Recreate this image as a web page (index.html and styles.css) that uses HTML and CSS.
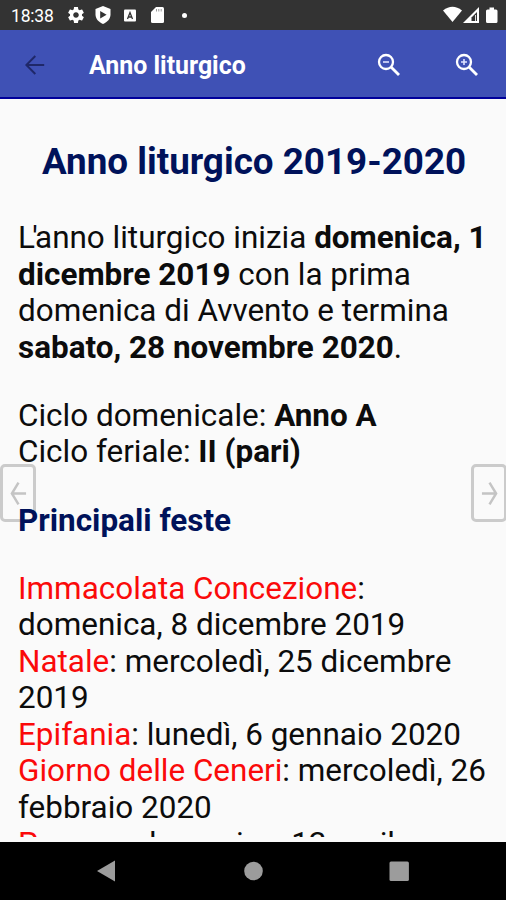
FILE: index.html
```html
<!DOCTYPE html>
<html lang="it">
<head>
<meta charset="utf-8">
<title>Anno liturgico</title>
<link rel="stylesheet" href="styles.css">
</head>
<body>
<div class="screen">
  <header class="status">
    <span class="clock">18:38</span>
    <svg class="st gear" viewBox="2 2 20 20"><path fill="#fff" d="M19.43 12.98c.04-.32.07-.64.07-.98s-.03-.66-.07-.98l2.11-1.65c.19-.15.24-.42.12-.64l-2-3.46c-.12-.22-.39-.3-.61-.22l-2.49 1c-.52-.4-1.08-.73-1.69-.98l-.38-2.65C14.46 2.18 14.25 2 14 2h-4c-.25 0-.46.18-.49.42l-.38 2.65c-.61.25-1.17.59-1.69.98l-2.49-1c-.23-.09-.49 0-.61.22l-2 3.46c-.13.22-.07.49.12.64l2.11 1.65c-.04.32-.07.65-.07.98s.03.66.07.98l-2.11 1.65c-.19.15-.24.42-.12.64l2 3.46c.12.22.39.3.61.22l2.49-1c.52.4 1.08.73 1.69.98l.38 2.65c.03.24.24.42.49.42h4c.25 0 .46-.18.49-.42l.38-2.65c.61-.25 1.17-.59 1.69-.98l2.49 1c.23.09.49 0 .61-.22l2-3.46c.12-.22.07-.49-.12-.64l-2.11-1.65zM12 15.5c-1.93 0-3.5-1.57-3.5-3.500s1.57-3.500 3.500-3.500 3.500 1.570 3.500 3.500-1.570 3.500-3.500 3.500z"/></svg>
    <svg class="st shield" viewBox="0 0 16 18"><path fill="#fff" d="M8 0l7.500 3v5.500c0 4.500-3.200 7.500-7.500 9.500-4.300-2-7.500-5-7.500-9.500V3z"/><path fill="#333" d="M5.200 5v7.400L11.600 8.700z"/></svg>
    <svg class="st abox" viewBox="0 0 12 12"><rect width="12" height="12" rx="1" fill="#fff"/><path d="M3.500 9.500L6 3l2.500 6.500M4.500 7.500h3" fill="none" stroke="#333" stroke-width="1.300"/></svg>
    <svg class="st card" viewBox="0 0 13 16"><path fill="#fff" d="M5 0h6.500Q13 0 13 1.500v13q0 1.500-1.500 1.500h-10Q0 16 0 14.500V5z"/><path stroke="#999" stroke-width="1" d="M5.500 2v2.500M7.800 2v2.500M10.200 2v2.500"/></svg>
    <i class="dot"></i>
    <span class="grow"></span>
    <svg class="signals" viewBox="0 0 56 18"><path fill="#fff" d="M0 4.500Q9.500-3 19 4.500L9.500 16z"/><path fill="#fff" d="M36 1v16H20z"/><path fill="#333" d="M34 6L28.500 11.500V15H34z"/><path d="M32.500 9v6" stroke="#ddd" stroke-width="1"/><path fill="#fff" d="M46.500 1.500h4.500v2h2q1.500 0 1.500 1.500v10.500q0 1.500-1.500 1.500h-8.500q-1.500 0-1.500-1.500V5q0-1.500 1.500-1.500h2z"/></svg>
  </header>
  <nav class="appbar">
    <svg class="back" viewBox="0 0 20 20"><path d="M19.200 10H2M10.300 1L1.300 10l9 9" fill="none" stroke="#1f2869" stroke-width="2"/></svg>
    <h1 class="title">Anno liturgico</h1>
    <svg class="mag" viewBox="0 0 24 24"><g fill="none" stroke="#fff"><circle cx="9" cy="9" r="7" stroke-width="2.300"/><path d="M14 14l8 8" stroke-width="2.800"/><path d="M6 9h6" stroke-width="1.600" stroke="#dfe2ff"/></g></svg>
    <svg class="mag plus" viewBox="0 0 24 24"><g fill="none" stroke="#fff"><circle cx="9" cy="9" r="7" stroke-width="2.300"/><path d="M14 14l8 8" stroke-width="2.800"/><path d="M6 9h6M9 6v6" stroke-width="1.600" stroke="#dfe2ff"/></g></svg>
  </nav>
  <main class="content">
    <div class="page">
      <h2 class="heading">Anno liturgico 2019-2020</h2>
      <p class="para"><span class="tight">L'</span>anno liturgico inizia <b>domenica, 1<br>dicembre 2019</b> con la prima<br>domenica di Avvento e termina<br><b>sabato, 28 novembre 2020</b>.</p>
      <p class="para">Ciclo domenicale: <b>Anno A</b><br>Ciclo feriale: <b>II (pari)</b></p>
      <h3 class="sub">Principali feste</h3>
      <p class="para"><span class="feast">Immacolata Concezione</span>:<br>domenica, 8 dicembre 2019<br><span class="feast">Natale</span>: mercoledì, 25 dicembre<br>2019<br><span class="feast">Epifania</span>: lunedì, 6 gennaio 2020<br><span class="feast">Giorno delle Ceneri</span>: mercoledì, 26<br>febbraio 2020<br><span class="feast">Pasqua</span>: domenica, 12 aprile</p>
    </div>
    <button class="pager prev" aria-label="Precedente"><svg viewBox="0 0 18 26"><path d="M17 13H2M9 1.500L2 13l7 11.500" fill="none" stroke="#c4c4c4" stroke-width="2.600"/></svg></button>
    <button class="pager next" aria-label="Successivo"><svg viewBox="0 0 18 26"><path d="M1 13h15M9 1.500L16 13 9 24.500" fill="none" stroke="#c4c4c4" stroke-width="2.600"/></svg></button>
  </main>
  <footer class="navbar">
    <svg viewBox="0 0 20 22"><path d="M18 .5v21L0 11z" fill="#9c9c9c"/></svg>
    <svg viewBox="0 0 20 22"><circle cx="10.500" cy="11" r="9.300" fill="#9c9c9c"/></svg>
    <svg viewBox="0 0 20 22"><rect x=".5" y="1.500" width="19.400" height="19.400" rx="1.500" fill="#9c9c9c"/></svg>
  </footer>
</div>
</body>
</html>
```
FILE: styles.css
```css
* { box-sizing: border-box; margin: 0; }
body { background: #fafafa; font-family: Roboto, "Liberation Sans", sans-serif; }
svg { display: block; flex: none; }
.screen { width: 506px; height: 900px; display: flex; flex-direction: column; overflow: hidden; }
.status { height: 30px; flex: none; background: #333; display: flex; align-items: center; padding: 0 7px 0 11px; }
.clock { width: 57px; color: #fff; font-size: 17.500px; letter-spacing: -0.2px; line-height: 30px; padding-top: 1px; }
.gear { width: 16px; height: 16px; }
.shield { width: 16px; height: 18px; margin-left: 11px; }
.abox { width: 12px; height: 13px; margin-left: 13px; }
.card { width: 13px; height: 16px; margin-left: 15px; }
.dot { width: 5px; height: 5px; border-radius: 50%; background: #fff; margin-left: 18px; }
.grow { flex: 1; }
.signals { width: 56px; height: 18px; }
.appbar { height: 69px; flex: none; background: #3f51b5; border-bottom: 2px solid #00009b; display: flex; align-items: center; padding: 2px 27px 0 25px; }
.back { width: 20px; height: 20px; }
.title { flex: 1; margin-left: 44px; padding-top: 3px; color: #fff; font-size: 24.900px; font-weight: 700; line-height: 30px; white-space: nowrap; }
.mag { width: 24px; height: 24px; }
.plus { margin-left: 54px; }
.content { height: 743px; flex: none; background: #fafafa; position: relative; border-bottom: 5px solid #fafafa; }
.page { position: relative; z-index: 1; pointer-events: none; height: 738px; overflow: hidden; padding: 41px 0 0 18px; font-size: 31.450px; line-height: 36.550px; color: #0c0c0c; white-space: nowrap; }
.heading { font-size: 36.800px; line-height: 43px; font-weight: 700; color: #00125a; margin: 0 0 37px -1px; text-align: center; padding-right: 15px; }
.para { font-weight: 400; margin-bottom: 31.400px; }
.para b { font-weight: 700; }
.sub { font-size: 31.450px; line-height: 36.600px; font-weight: 700; color: #00125a; margin-bottom: 31.400px; padding-top: 0.500px; }
.feast { color: #fa0a0a; }
.tight { letter-spacing: -2.700px; }
.pager { position: absolute; top: 365px; width: 36px; height: 58px; border: 3px solid #cbcbcb; border-radius: 5px; background: none; padding: 0; display: flex; align-items: center; justify-content: center; }
.pager svg { width: 17px; height: 25px; }
.prev { left: 0; }
.next { right: -1px; }
.navbar { height: 58px; flex: none; background: #000; display: flex; justify-content: center; gap: 126px; padding-top: 18px; }
.navbar svg { width: 20px; height: 22px; }
```
